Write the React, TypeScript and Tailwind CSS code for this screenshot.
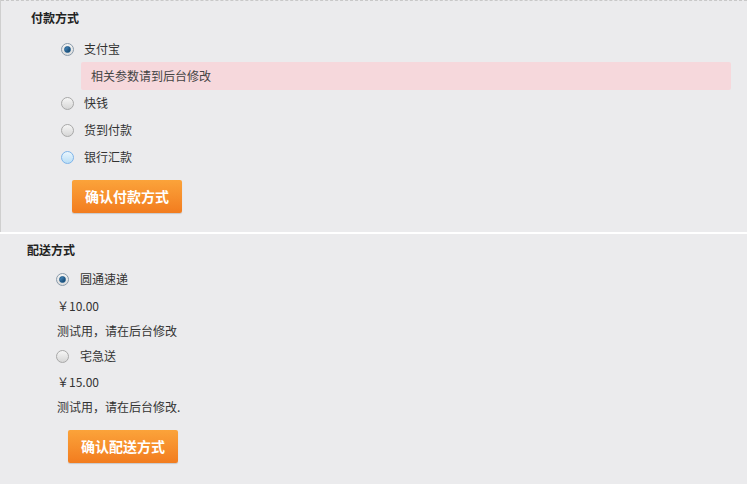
import React from "react";

const font = { fontFamily: '"Noto Sans CJK SC", "Noto Sans", sans-serif' };

function Radio({ checked, hover }: { checked?: boolean; hover?: boolean }) {
  return (
    <span
      className={`inline-flex items-center justify-center w-[13px] h-[13px] rounded-full border ${
        hover ? "border-[#7eb4ea] bg-gradient-to-b from-[#eaf6fd] to-[#b9def6]" : checked ? "border-[#8a9bab] bg-gradient-to-b from-[#f4f4f4] to-[#dcdcdc]" : "border-[#a8a8a8] bg-gradient-to-b from-[#f6f6f6] to-[#d6d6d6]"
      }`}
    >
      {checked && <span className="w-[7px] h-[7px] rounded-full bg-gradient-to-br from-[#4d90c6] to-[#0e3f66] border border-[#1d5a8a]" />}
    </span>
  );
}

function OrangeButton({ children }: { children: React.ReactNode }) {
  return (
    <button className="w-[110px] h-[33px] rounded-[2px] bg-gradient-to-b from-[#fba33a] to-[#f27c1e] text-white font-bold text-[14px] shadow-[0_1px_1px_rgba(0,0,0,0.15)]">
      {children}
    </button>
  );
}

export default function App() {
  return (
    <div className="w-[747px] h-[484px] bg-[#ebebed] text-[12px] text-[#333]" style={font}>
      <div className="h-[232px] border-l border-l-[#cfcfcf]">
        <div className="h-0 border-t border-dashed border-t-[#c8c8c8]" />
        <div className="pt-[8px]">
          <div className="pl-[30px] font-bold text-[12px] leading-[18px] text-[#222]">付款方式</div>
          <div className="pl-[60px] mt-[13px] flex flex-col">
            <label className="flex items-center h-[18px] gap-[10px]">
              <Radio checked />
              <span>支付宝</span>
            </label>
            <div className="ml-[20px] mt-[4px] w-[650px] h-[28px] bg-[#f6d8dc] rounded-[2px] pl-[10px] flex items-center text-[#444]">
              相关参数请到后台修改
            </div>
            <label className="flex items-center h-[18px] gap-[10px] mt-[4px]">
              <Radio />
              <span>快钱</span>
            </label>
            <label className="flex items-center h-[18px] gap-[10px] mt-[9px]">
              <Radio />
              <span>货到付款</span>
            </label>
            <label className="flex items-center h-[18px] gap-[10px] mt-[9px]">
              <Radio hover />
              <span>银行汇款</span>
            </label>
            <div className="ml-[11px] mt-[14px]">
              <OrangeButton>确认付款方式</OrangeButton>
            </div>
          </div>
        </div>
      </div>
      <div className="h-[2px] bg-white" />
      <div className="pt-[7px]">
        <div className="pl-[27px] font-bold text-[12px] leading-[18px] text-[#222]">配送方式</div>
        <div className="pl-[56px] mt-[11px] flex flex-col">
          <label className="flex items-center h-[18px] gap-[11px]">
            <Radio checked />
            <span>圆通速递</span>
          </label>
          <div className="mt-[9px] leading-[18px] ml-[1px]">￥10.00</div>
          <div className="mt-[7px] leading-[18px] ml-[1px]">测试用，请在后台修改</div>
          <label className="flex items-center h-[18px] gap-[11px] mt-[7px]">
            <Radio />
            <span>宅急送</span>
          </label>
          <div className="mt-[8px] leading-[18px] ml-[1px]">￥15.00</div>
          <div className="mt-[7px] leading-[18px] ml-[1px]">测试用，请在后台修改.</div>
          <div className="ml-[12px] mt-[14px]">
            <OrangeButton>确认配送方式</OrangeButton>
          </div>
        </div>
      </div>
    </div>
  );
}
